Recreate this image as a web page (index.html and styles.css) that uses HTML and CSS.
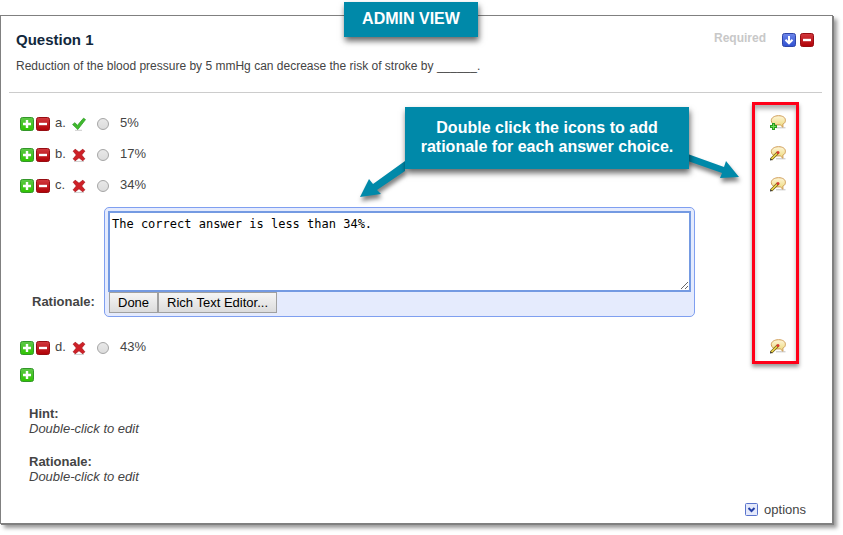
FILE: index.html
```html
<!DOCTYPE html>
<html lang="en">
<head>
  <meta charset="UTF-8">
  <meta name="viewport" content="width=device-width, initial-scale=1.0">
  <title>Question 1</title>
  <link rel="stylesheet" href="styles.css">
</head>
<body>

  <!-- shared icons -->
  <svg class="sprite" aria-hidden="true">
    <defs>
      <linearGradient id="green" x2="0" y2="1"><stop offset="0" stop-color="#5fc84a"/><stop offset="1" stop-color="#2fc400"/></linearGradient>
      <linearGradient id="red" x2="0" y2="1"><stop offset="0" stop-color="#d23a3f"/><stop offset="1" stop-color="#b00006"/></linearGradient>
      <linearGradient id="blue" x2="0" y2="1"><stop offset="0" stop-color="#6d86ea"/><stop offset="1" stop-color="#2f50d0"/></linearGradient>
      <linearGradient id="cream" x2="0" y2="1"><stop offset="0" stop-color="#fff6d8"/><stop offset="1" stop-color="#ecd878"/></linearGradient>
    </defs>
    <symbol id="plus" viewBox="0 0 14 14">
      <rect x=".5" y=".5" width="13" height="13" rx="2" fill="url(#green)" stroke="#33962a"/>
      <path d="M7 3v8M3 7h8" stroke="#fff" stroke-width="2.4"/>
    </symbol>
    <symbol id="minus" viewBox="0 0 14 14">
      <rect x=".5" y=".5" width="13" height="13" rx="2" fill="url(#red)" stroke="#960d12"/>
      <path d="M3 7h8" stroke="#fff" stroke-width="2.4"/>
    </symbol>
    <symbol id="down" viewBox="0 0 14 14">
      <rect x=".5" y=".5" width="13" height="13" rx="2" fill="url(#blue)" stroke="#3046a8"/>
      <path d="M7 3v7M3.5 6.8L7 10.3l3.500-3.500" fill="none" stroke="#fff" stroke-width="2"/>
    </symbol>
    <symbol id="check" viewBox="0 0 14 14">
      <path d="M3 13.300h7" stroke="#ccc" stroke-width="1"/>
      <path d="M.6 7.500L3 5.700l2.300 2.800L11.500 1.200l2 1.400L5.800 12.500z" fill="#3fbb2c" stroke="#2c9a22" stroke-width=".8"/>
    </symbol>
    <symbol id="cross" viewBox="0 0 14 14">
      <path d="M2 13.400h10" stroke="#ccc" stroke-width="1"/>
      <path d="M1.200 3.200l2-2L7 4.300 10.800 1.200l2 2L9.600 7l3.200 3.800-2 2L7 9.700l-3.800 3.100-2-2L4.400 7z" fill="#cf2027" stroke="#a81218" stroke-width=".8"/>
    </symbol>
    <symbol id="bubble" viewBox="0 0 16 15">
      <path d="M6 12.800h9.500" stroke="#999" stroke-width="1" opacity=".6"/>
      <path d="M8.500 .7C12.700 .7 15.400 2.400 15.400 5.300c0 2-1 3.200-2.600 3.900L13 12.300 10.300 9.900H6.500C3.300 9.900 1.300 8.100 1.300 5.400S4.500 .7 8.500 .7z" fill="url(#cream)" stroke="#cf9c55"/>
    </symbol>
    <symbol id="comment-add" viewBox="0 0 16 15">
      <use href="#bubble"/>
      <path d="M3.500 8v7M0 11.500h7" stroke="#2a9a20" stroke-width="3"/>
      <path d="M3.500 9v5M1 11.500h5" stroke="#6edc55" stroke-width="1"/>
    </symbol>
    <symbol id="comment-edit" viewBox="0 0 16 15">
      <use href="#bubble"/>
      <path d="M1 13.500L8 6.500" stroke="#6f5c1a" stroke-width="3"/>
      <path d="M1.500 13L7.200 7.300" stroke="#f4dc4e" stroke-width="1.500"/>
      <path d="M0 14.500l.5-2 1.500 1.500z" fill="#111"/>
      <circle cx="8" cy="6.500" r="1.500" fill="#d83a30"/>
    </symbol>
  </svg>

  <div class="question">
    <div class="banner">ADMIN VIEW</div>

    <div class="question-header">
      <h1>Question 1</h1>
      <span class="required">Required</span>
      <button class="icon-button" aria-label="Move down"><svg><use href="#down"/></svg></button>
      <button class="icon-button" aria-label="Delete question"><svg><use href="#minus"/></svg></button>
    </div>
    <p class="prompt">Reduction of the blood pressure by 5 mmHg can decrease the risk of stroke by ______.</p>

    <div class="answers">
      <ul>
        <li>
          <div class="choice">
            <button class="icon-button" aria-label="Add choice"><svg><use href="#plus"/></svg></button>
            <button class="icon-button" aria-label="Remove choice"><svg><use href="#minus"/></svg></button>
            <span class="letter">a.</span>
            <svg class="mark"><use href="#check"/></svg>
            <input type="radio" name="answer" id="a">
            <label for="a">5%</label>
            <button class="comment-button" aria-label="Add rationale"><svg><use href="#comment-add"/></svg></button>
          </div>
        </li>
        <li>
          <div class="choice">
            <button class="icon-button" aria-label="Add choice"><svg><use href="#plus"/></svg></button>
            <button class="icon-button" aria-label="Remove choice"><svg><use href="#minus"/></svg></button>
            <span class="letter">b.</span>
            <svg class="mark"><use href="#cross"/></svg>
            <input type="radio" name="answer" id="b">
            <label for="b">17%</label>
            <button class="comment-button" aria-label="Edit rationale"><svg><use href="#comment-edit"/></svg></button>
          </div>
        </li>
        <li>
          <div class="choice">
            <button class="icon-button" aria-label="Add choice"><svg><use href="#plus"/></svg></button>
            <button class="icon-button" aria-label="Remove choice"><svg><use href="#minus"/></svg></button>
            <span class="letter">c.</span>
            <svg class="mark"><use href="#cross"/></svg>
            <input type="radio" name="answer" id="c">
            <label for="c">34%</label>
            <button class="comment-button" aria-label="Edit rationale"><svg><use href="#comment-edit"/></svg></button>
          </div>
          <div class="rationale">
            <label for="rationaleText">Rationale:</label>
            <div class="editor">
              <textarea id="rationaleText" spellcheck="false">The correct answer is less than 34%.</textarea>
              <div class="editor-buttons">
                <button>Done</button>
                <button>Rich Text Editor...</button>
              </div>
            </div>
          </div>
        </li>
        <li>
          <div class="choice">
            <button class="icon-button" aria-label="Add choice"><svg><use href="#plus"/></svg></button>
            <button class="icon-button" aria-label="Remove choice"><svg><use href="#minus"/></svg></button>
            <span class="letter">d.</span>
            <svg class="mark"><use href="#cross"/></svg>
            <input type="radio" name="answer" id="d">
            <label for="d">43%</label>
            <button class="comment-button" aria-label="Edit rationale"><svg><use href="#comment-edit"/></svg></button>
          </div>
        </li>
      </ul>
      <button class="icon-button add-last" aria-label="Add choice"><svg><use href="#plus"/></svg></button>

      <!-- annotations -->
      <div class="highlight"></div>
      <svg class="arrows" viewBox="0 0 390 50">
        <path d="M10 38L19 20l4 5L55 2v10L27 31l4 4z"/>
        <path d="M335 -6L374 8l2-6 13 16-19 1 2-5L335 1z"/>
      </svg>
      <div class="callout">Double click the icons to add<br>rationale for each answer choice.</div>
    </div>

    <dl class="notes">
      <dt>Hint:</dt>
      <dd>Double-click to edit</dd>
      <dt>Rationale:</dt>
      <dd>Double-click to edit</dd>
    </dl>

    <button class="options">
      <svg viewBox="0 0 13 13">
        <rect x=".5" y=".5" width="12" height="12" rx="1" fill="#e4e9fb" stroke="#5a74cc"/>
        <path d="M3.500 5l3 3 3-3" fill="none" stroke="#2440a8" stroke-width="2"/>
      </svg>
      options
    </button>
  </div>

</body>
</html>
```
FILE: styles.css
```css
body {
  font-family: "Liberation Sans", Arial, sans-serif;
  font-size: 13px;
  line-height: 15px;
  color: #444;
  margin: 0;
  background-color: #fff;
}

h1, p, ul, dl, dd {
  margin: 0;
  padding: 0;
}

ul {
  list-style: none;
}

button {
  font: inherit;
  color: inherit;
}

.sprite {
  position: absolute;
  width: 0;
  height: 0;
}

.question {
  position: relative;
  margin: 15px 10px 10px 0;
  padding-bottom: 6px;
  border: 1px solid #808080;
  background-color: #fff;
  box-shadow: 1px 1px 0 #808080, 4px 4px 4px rgba(0, 0, 0, 0.4);
}

.banner,
.callout {
  position: absolute;
  box-sizing: border-box;
  background-color: #0089a9;
  color: #fff;
  font-size: 16px;
  font-weight: bold;
  line-height: 19px;
  text-align: center;
  box-shadow: 1px 4px 6px rgba(0, 0, 0, 0.6);
}

.banner {
  top: -14px;
  left: 343px;
  width: 134px;
  padding: 7px 0 9px;
}

.question-header {
  display: flex;
  align-items: flex-start;
  gap: 4px;
  padding: 15px 18px 0 15px;
}

.question-header h1 {
  flex: 1;
  font-size: 15px;
  line-height: 18px;
  color: #12283c;
}

.required {
  margin-right: 12px;
  color: #c8c8c8;
  font-size: 12px;
  font-weight: bold;
}

.icon-button,
.comment-button {
  display: block;
  padding: 0;
  border: 0;
  background: none;
  cursor: pointer;
}

.icon-button {
  width: 14px;
  height: 14px;
  margin-top: 2px;
}

.icon-button svg,
.comment-button svg {
  display: block;
  width: 100%;
  height: 100%;
}

.prompt {
  margin: 0 10px 0 8px;
  padding: 10px 7px 18px;
  border-bottom: 1px solid #ccc;
  font-size: 12px;
}

.answers {
  position: relative;
  padding: 22px 46px 0 19px;
}

.answers li + li {
  margin-top: 15px;
}

.choice {
  display: flex;
  align-items: flex-start;
}

.choice .icon-button {
  margin-right: 2px;
}

.letter {
  width: 17px;
  margin-left: 3px;
}

.mark {
  width: 14px;
  height: 14px;
  margin-top: 2px;
}

.choice input {
  appearance: none;
  width: 12px;
  height: 12px;
  margin: 3px 11px 0;
  border: 1px solid #a5a5a5;
  border-radius: 50%;
  background: linear-gradient(#e8e8e8, #dcdcdc);
}

.choice label {
  flex: 1;
}

.comment-button {
  width: 16px;
  height: 15px;
}

.rationale {
  display: flex;
  align-items: flex-end;
  gap: 8px;
  margin: 14px 91px 22px 12px;
}

.rationale label {
  width: 64px;
  padding-bottom: 8px;
  font-weight: bold;
}

.editor {
  flex: 1;
  padding: 3px;
  border: 1px solid #7f9ff0;
  border-radius: 5px;
  background-color: #e5ebfd;
}

.editor textarea {
  display: block;
  box-sizing: border-box;
  width: 100%;
  height: 81px;
  padding: 2px;
  border: 2px solid #749ae2;
  outline: none;
  background-color: #fff;
  color: #000;
  font: 12px/18px "DejaVu Sans Mono", monospace;
}

.editor-buttons {
  display: flex;
  padding: 0 1px;
}

.editor-buttons button {
  height: 21px;
  padding: 0 8px;
  border: 1px solid #a0a0a0;
  background: linear-gradient(#f5f5f5, #dcdcdc);
  color: #000;
}

.add-last {
  margin-top: 13px;
}

.highlight {
  position: absolute;
  box-sizing: border-box;
  top: 9px;
  right: 33px;
  bottom: 18px;
  width: 47px;
  border: 3px solid #ff0019;
  box-shadow: 0 3px 4px rgba(0, 0, 0, 0.4), inset 0 4px 4px rgba(0, 0, 0, 0.3);
  pointer-events: none;
}

.arrows {
  position: absolute;
  top: 66px;
  left: 349px;
  width: 390px;
  height: 50px;
  overflow: visible;
  fill: #0089a9;
  filter: drop-shadow(1px 4px 2px rgba(0, 0, 0, 0.5));
  pointer-events: none;
}

.callout {
  top: 14px;
  left: 404px;
  width: 284px;
  padding: 11px 0 13px;
}

.notes {
  padding: 24px 28px 0;
}

.notes dt {
  font-weight: bold;
}

.notes dd {
  margin-bottom: 18px;
  font-style: italic;
}

.options {
  display: flex;
  align-items: center;
  gap: 6px;
  margin: 0 26px 0 auto;
  padding: 0;
  border: 0;
  background: none;
  cursor: pointer;
}

.options svg {
  width: 13px;
  height: 13px;
}
```
